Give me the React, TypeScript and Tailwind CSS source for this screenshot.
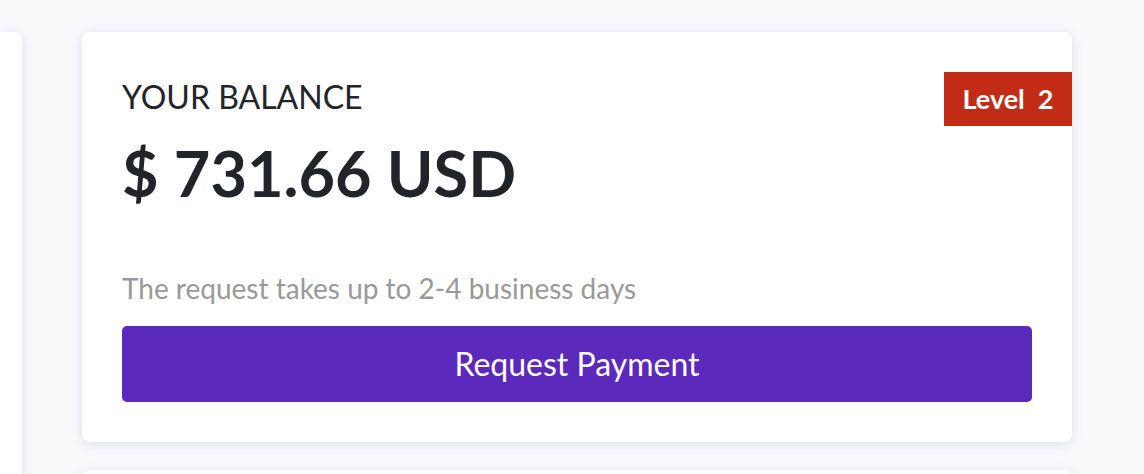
const lato = "font-['Lato','Liberation_Sans',sans-serif]";

function BalanceCard() {
  return (
    <div className="relative rounded-lg bg-white px-10 pb-10 pt-[45px] shadow-[0_2px_12px_rgba(30,35,60,0.12)]">
      {/* Level badge */}
      <div className="absolute right-0 top-10 flex h-[54px] w-32 items-center justify-center bg-[#c22c16] text-[27px] font-bold text-white">
        Level<span className="ml-[13px]">2</span>
      </div>

      <p className="text-[32px] leading-10 text-[#212529]">YOUR BALANCE</p>
      <p className="mt-5 text-[63px] font-bold leading-[72px] text-[#212529]">$ 731.66 USD</p>

      <p className="mt-[61px] text-[28px] leading-9 text-[#999999]">
        The request takes up to 2-4 business days
      </p>
      <button className="mt-5 flex h-[76px] w-full items-center justify-center rounded-[5px] bg-[#5b29bb] text-[32px] text-white">
        Request Payment
      </button>
    </div>
  );
}

export default function App() {
  return (
    <div className={`${lato} h-[474px] overflow-hidden bg-[#f8f9fb] pt-8`}>
      <div className="flex gap-[60px]">
        {/* Sidebar card (cut off) */}
        <div className="h-[500px] w-[22px] shrink-0 rounded-r-lg bg-white shadow-[0_2px_12px_rgba(30,35,60,0.12)]" />

        <div className="flex w-[990px] flex-col gap-7">
          <BalanceCard />
          <div className="h-[200px] rounded-lg bg-white shadow-[0_2px_12px_rgba(30,35,60,0.12)]" />
        </div>
      </div>
    </div>
  );
}
